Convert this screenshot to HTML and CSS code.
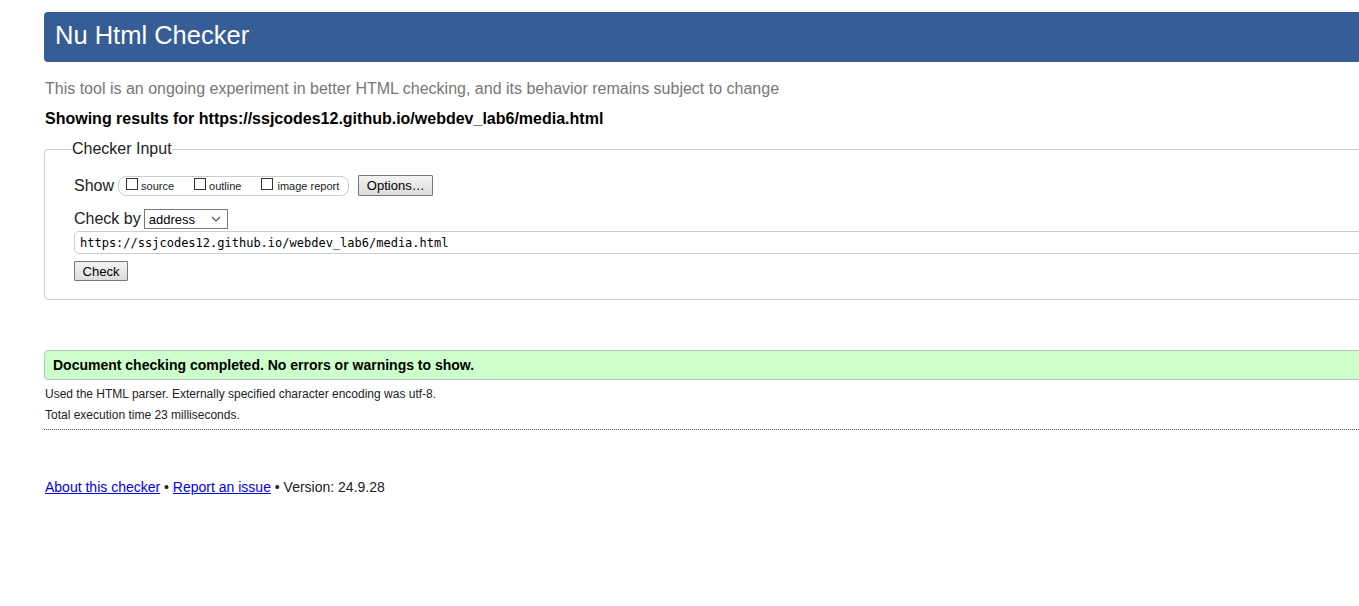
FILE: index.html
```html
<!DOCTYPE html>
<html lang="en">
<head>
<meta charset="utf-8">
<title>Nu Html Checker</title>
<link rel="stylesheet" href="styles.css">
</head>
<body>
<h1 class="banner">Nu Html Checker</h1>
<p class="tagline">This tool is an ongoing experiment in better HTML checking, and its behavior remains subject to change</p>
<p class="showing">Showing results for https://ssjcodes12.github.io/webdev_lab6/media.html</p>
<form class="checker">
  <fieldset class="input-box">
    <legend class="legend">Checker Input</legend>
    <div class="row row-show">
      <span class="row-label">Show</span>
      <span class="pill">
        <label class="opt"><input class="cb" type="checkbox"><span>source</span></label>
        <label class="opt"><input class="cb" type="checkbox"><span>outline</span></label>
        <label class="opt"><input class="cb" type="checkbox"><span>image report</span></label>
      </span>
      <button type="button" class="btn btn-options">Options…</button>
    </div>
    <div class="row row-by">
      <span class="row-label">Check by</span>
      <span class="select">
        <span class="select-text">address</span>
        <svg class="chev" width="10" height="6" viewBox="0 0 10 6"><path d="M1 1 L5 5 L9 1" fill="none" stroke="#555" stroke-width="1.2"/></svg>
      </span>
    </div>
    <input class="url" type="text" value="https://ssjcodes12.github.io/webdev_lab6/media.html">
    <div class="row row-check">
      <button type="button" class="btn btn-check">Check</button>
    </div>
  </fieldset>
</form>
<p class="success">Document checking completed. No errors or warnings to show.</p>
<p class="details">Used the HTML parser. Externally specified character encoding was utf-8.</p>
<p class="details details-2">Total execution time 23 milliseconds.</p>
<hr class="dots">
<p class="footer"><a class="link" href="#">About this checker</a> • <a class="link" href="#">Report an issue</a> • Version: 24.9.28</p>
</body>
</html>
```

FILE: styles.css
```css
html {
  overflow: hidden;
  background: #fff;
}

body {
  margin: 12px -60px 0 44px;
  font-family: "Liberation Sans", Arial, sans-serif;
  color: #000;
}

.banner {
  margin: 0;
  height: 50px;
  background: #365d95;
  color: #fff;
  font-size: 25.5px;
  font-weight: normal;
  line-height: 47px;
  padding-left: 11px;
  border-radius: 4px 0 0 4px;
}

.tagline {
  margin: 18px 0 0 1px;
  font-size: 16px;
  line-height: 18px;
  color: #777;
}

.showing {
  margin: 12px 0 0 1px;
  font-size: 16px;
  line-height: 18px;
  font-weight: bold;
  color: #000;
}

.checker {
  margin: 12px 0 0;
}

.input-box {
  margin: 0;
  min-width: 0;
  border: 1px solid #ccc;
  border-radius: 4px 0 0 4px;
  padding: 0 0 18px 29px;
}

.legend {
  font-size: 16px;
  line-height: 18px;
  padding: 0;
  margin-left: -2px;
  color: #222;
}

.row {
  display: flex;
  align-items: center;
}

.row-show {
  margin-top: 17px;
  height: 21px;
}

.row-label {
  font-size: 16px;
  line-height: 18px;
  color: #222;
  margin-right: 4px;
}

.pill {
  display: inline-flex;
  align-items: center;
  height: 20px;
  box-sizing: border-box;
  border: 1px solid #ccc;
  border-radius: 8px;
  padding: 0 9px 0 7px;
}

.opt {
  display: inline-flex;
  align-items: center;
  font-size: 11px;
  color: #222;
  margin-right: 20px;
}

.opt:last-child {
  margin-right: 0;
}

.cb {
  appearance: none;
  -webkit-appearance: none;
  width: 12px;
  height: 12px;
  margin: 0 3px 0 0;
  border: 1px solid #333;
  background: #fff;
  position: relative;
  top: -2px;
}

.opt:last-child .cb {
  margin-right: 4px;
}

.btn {
  font: 13px "Liberation Sans", Arial, sans-serif;
  color: #000;
  background: linear-gradient(#f3f3f3, #dcdcdc);
  border: 1px solid #767676;
  border-radius: 1px;
  padding: 0;
  box-sizing: border-box;
}

.btn-options {
  margin-left: 9px;
  width: 75px;
  height: 21px;
}

.row-by {
  margin-top: 13px;
  height: 20px;
}

.row-by .row-label {
  margin-right: 3px;
}

.select {
  display: inline-flex;
  align-items: center;
  justify-content: space-between;
  width: 84px;
  height: 20px;
  box-sizing: border-box;
  border: 1px solid #767676;
  padding: 0 6px 0 4px;
  background: #fff;
  font-size: 13px;
  color: #000;
}

.url {
  display: block;
  margin: 2px 0 0;
  width: 100%;
  height: 23px;
  box-sizing: border-box;
  border: 1px solid #ccc;
  border-radius: 5px;
  padding: 0 5px;
  font: 12px "DejaVu Sans Mono", "Liberation Mono", monospace;
  color: #000;
  background: #fff;
}

.row-check {
  margin-top: 7px;
}

.btn-check {
  width: 54px;
  height: 20px;
}

.success {
  margin: 50px 0 0;
  height: 30px;
  box-sizing: border-box;
  border: 1px solid #b8c8b8;
  border-radius: 4px 0 0 4px;
  background: #ccffcc;
  font-weight: bold;
  font-size: 14px;
  line-height: 28px;
  padding-left: 8px;
  color: #000;
}

.details {
  margin: 7px 0 0 1px;
  font-size: 12px;
  line-height: 14px;
  color: #222;
}

.details-2 {
  margin-top: 7px;
}

.dots {
  margin: 7px 0 0;
  border: 0;
  border-top: 1px dotted #555;
  height: 0;
}

.footer {
  margin: 49px 0 0 1px;
  font-size: 14px;
  line-height: 16px;
  color: #222;
}

.link {
  color: #00e;
}
```
